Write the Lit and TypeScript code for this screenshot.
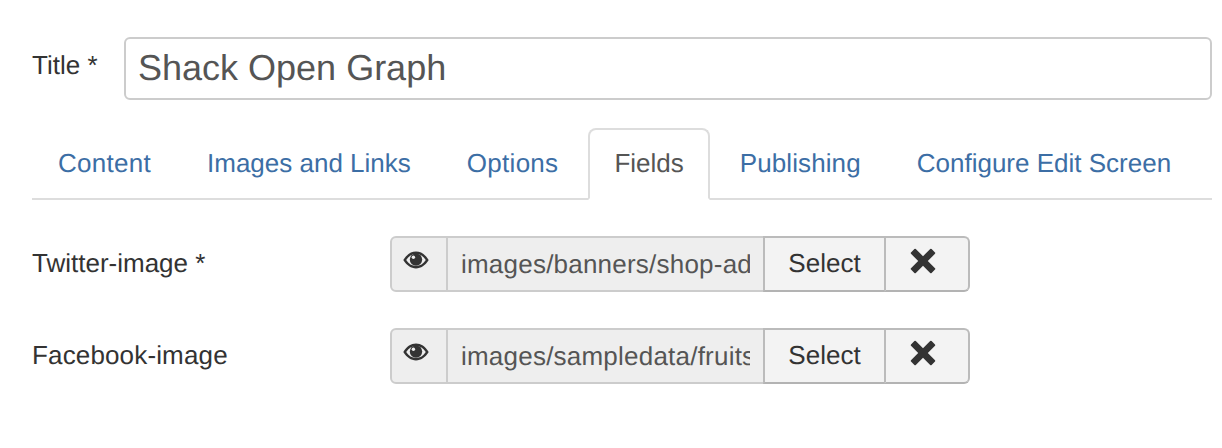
import { LitElement, html, css, svg } from "lit";
import { customElement } from "lit/decorators.js";

const TABS = [
  { name: "Content", spacing: 0.28 },
  { name: "Images and Links", spacing: 0 },
  { name: "Options", spacing: 0.28 },
  { name: "Fields", spacing: 0 },
  { name: "Publishing", spacing: 0.1 },
  { name: "Configure Edit Screen", spacing: 0 },
];
const FIELDS = [
  { label: "Twitter-image *", value: "images/banners/shop-ad.jpg", spacing: 0 },
  { label: "Facebook-image", value: "images/sampledata/fruitshop/apple.jpg", spacing: 0.15 },
];

const eye = svg`<svg class="eye" viewBox="0 0 26 18" width="26" height="18" aria-hidden="true">
  <path fill-rule="evenodd" fill="#333" d="M.3 9C3.800 3.400 8 .6 13 .6S22.200 3.400 25.700 9C22.200 14.600 18 17.400 13 17.400S3.800 14.600.3 9ZM3.200 9C5.600 12.900 9 15 13 15S20.400 12.900 22.800 9C20.400 5.100 17 3 13 3S5.600 5.100 3.200 9Z"/>
  <circle cx="13" cy="8.600" r="6.200" fill="#333"/>
  <circle cx="10.400" cy="6.200" r="1.700" fill="#eee"/>
</svg>`;

const cross = svg`<svg class="cross" viewBox="0 0 26 26" width="26" height="26" aria-hidden="true">
  <path fill="#333" d="M5.800 1 13 8.200 20.200 1a1 1 0 0 1 1.400 0l3.400 3.400a1 1 0 0 1 0 1.400L17.800 13l7.200 7.200a1 1 0 0 1 0 1.400L21.600 25a1 1 0 0 1-1.400 0L13 17.800 5.800 25a1 1 0 0 1-1.400 0L1 21.600a1 1 0 0 1 0-1.400L8.200 13 1 5.800a1 1 0 0 1 0-1.400L4.400 1a1 1 0 0 1 1.400 0Z"/>
</svg>`;

@customElement("app-root")
export class AppRoot extends LitElement {
  static styles = css`
    :host {
      display: block;
      width: 1222px;
      height: 448px;
      box-sizing: border-box;
      padding: 37px 10px 0 32px;
      background: #fff;
      font-family: "Liberation Sans", Arial, sans-serif;
      font-size: 26px;
      line-height: 36px;
      color: #333;
      overflow: hidden;
      text-rendering: geometricPrecision;
    }
    input, button { text-rendering: geometricPrecision; }
    .title-row {
      display: flex;
      align-items: flex-start;
      gap: 27px;
    }
    .title-label {
      width: 65px;
      padding-top: 10px;
      white-space: nowrap;
    }
    .title-input {
      flex: 1;
      min-width: 0;
      height: 63px;
      box-sizing: border-box;
      border: 2px solid #ccc;
      border-radius: 6px;
      padding: 0 12px 2px;
      font: 36px "Liberation Sans", Arial, sans-serif;
      color: #555;
      background: #fff;
      outline: none;
    }
    .tabs {
      display: flex;
      margin-top: 28px;
      border-bottom: 2px solid #ddd;
      height: 70px;
    }
    .tab {
      height: 72px;
      box-sizing: border-box;
      margin-right: 4px;
      padding: 15px 24px 17px;
      border: 2px solid transparent;
      border-radius: 8px 8px 0 0;
      color: #3c6ea5;
      white-space: nowrap;
    }
    .tab.active {
      color: #555;
      background: #fff;
      border-color: #ddd;
      border-bottom-color: #fff;
    }
    .fields {
      display: flex;
      flex-direction: column;
      gap: 36px;
      margin-top: 36px;
    }
    .field {
      display: flex;
      align-items: center;
      height: 56px;
    }
    .field-label {
      width: 358px;
      margin-top: -2px;
    }
    .group {
      display: flex;
      height: 56px;
    }
    .addon {
      width: 58px;
      box-sizing: border-box;
      display: flex;
      align-items: center;
      justify-content: center;
      background: #eee;
      border: 2px solid #ccc;
      border-radius: 6px 0 0 6px;
      padding: 0 6px 8px 0;
    }
    .path {
      width: 315px;
      box-sizing: border-box;
      height: 56px;
      border: solid #ccc;
      border-width: 2px 0;
      padding: 0 13px 0 13px;
      background: #eee;
      color: #555;
      font: 26px "Liberation Sans", Arial, sans-serif;
      letter-spacing: 0.22px;
      outline: none;
    }
    .btn {
      box-sizing: border-box;
      height: 56px;
      display: flex;
      align-items: center;
      justify-content: center;
      background: #f3f3f3;
      border: 2px solid #bbb;
      border-bottom-color: #b3b3b3;
      color: #333;
      font: 26px "Liberation Sans", Arial, sans-serif;
      padding: 0 0 2px;
    }
    .select { width: 123px; }
    .clear {
      width: 86px;
      margin-left: -2px;
      border-radius: 0 6px 6px 0;
      padding: 0 9px 7px 0;
    }
  `;

  render() {
    return html`
      <div class="title-row">
        <label class="title-label">Title *</label>
        <input class="title-input" .value=${"Shack Open Graph"} />
      </div>
      <nav class="tabs">
        ${TABS.map(
          (t) => html`<div
            class="tab ${t.name === "Fields" ? "active" : ""}"
            style="letter-spacing:${t.spacing}px"
          >${t.name}</div>`
        )}
      </nav>
      <div class="fields">
        ${FIELDS.map(
          (f) => html`
            <div class="field">
              <label class="field-label" style="letter-spacing:${f.spacing}px">${f.label}</label>
              <div class="group">
                <span class="addon">${eye}</span>
                <input class="path" readonly .value=${f.value} />
                <button class="btn select">Select</button>
                <button class="btn clear">${cross}</button>
              </div>
            </div>
          `
        )}
      </div>
    `;
  }
}
